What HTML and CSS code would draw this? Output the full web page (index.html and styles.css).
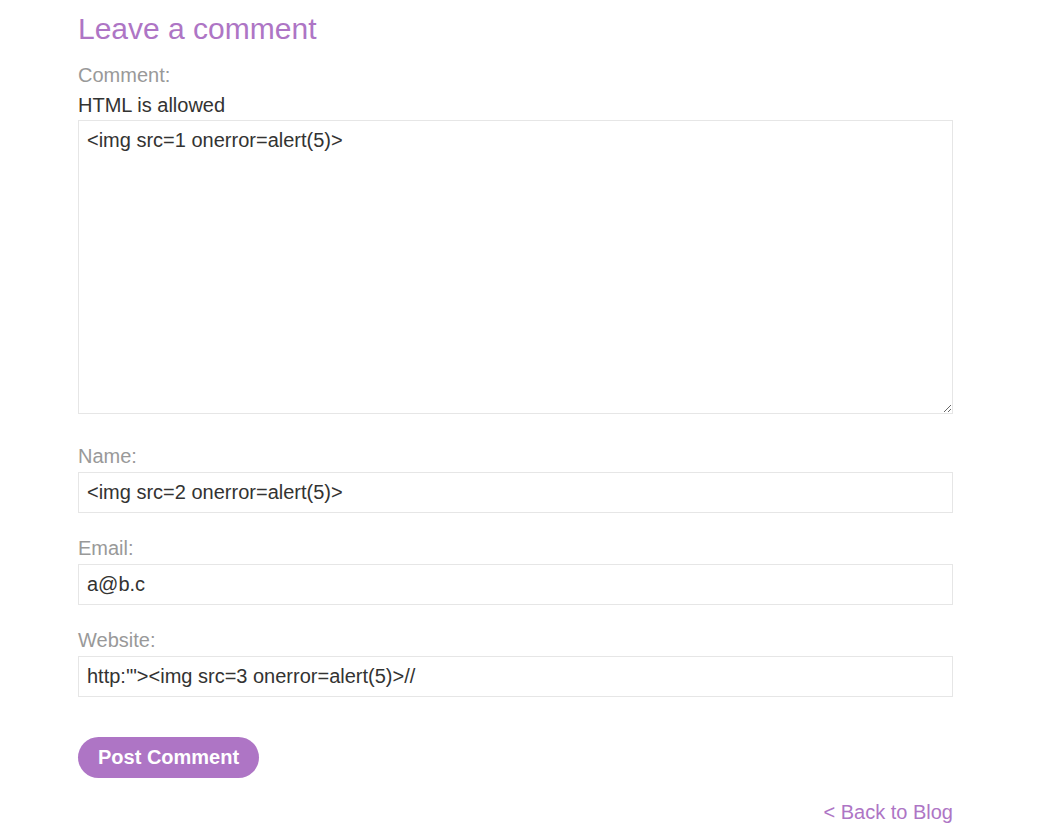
FILE: index.html
```html
<!DOCTYPE html>
<html lang="en">
<head>
<meta charset="utf-8">
<title>Leave a comment</title>
<link rel="stylesheet" href="styles.css">
</head>
<body>
<section class="add-comment">
  <h2 class="title">Leave a comment</h2>
  <form class="comment-form">
    <label class="field-label" for="comment">Comment:</label>
    <div class="note">HTML is allowed</div>
    <textarea id="comment" class="comment-box">&lt;img src=1 onerror=alert(5)&gt;</textarea>
    <label class="field-label" for="name">Name:</label>
    <input id="name" class="text-field" type="text" value="&lt;img src=2 onerror=alert(5)&gt;">
    <label class="field-label" for="email">Email:</label>
    <input id="email" class="text-field" type="text" value="a@b.c">
    <label class="field-label" for="website">Website:</label>
    <input id="website" class="text-field" type="text" value="http:'&quot;&gt;&lt;img src=3 onerror=alert(5)&gt;//">
    <button class="button" type="button">Post Comment</button>
  </form>
  <div class="back-row"><a class="back-link" href="#">&lt; Back to Blog</a></div>
</section>
</body>
</html>
```
FILE: styles.css
```css
html, body {
  margin: 0;
  padding: 0;
  background: #ffffff;
}
body {
  font-family: "Liberation Sans", Arial, sans-serif;
  font-size: 20px;
  color: #333332;
}
.add-comment {
  width: 875px;
  margin-left: 78px;
}
.title {
  margin: 0;
  padding-top: 11px;
  font-size: 30px;
  line-height: 36px;
  font-weight: normal;
  color: #ae75c5;
}
.comment-form {
  display: flex;
  flex-direction: column;
  margin-top: 16px;
}
.field-label {
  display: block;
  color: #999999;
  line-height: 24px;
  margin-bottom: 4px;
}
.note {
  line-height: 24px;
  margin-top: 2px;
  margin-bottom: 3px;
}
.comment-box,
.text-field {
  box-sizing: border-box;
  width: 875px;
  border: 1px solid #e6e6e6;
  font-family: "Liberation Sans", Arial, sans-serif;
  font-size: 20px;
  color: #333332;
  padding: 8px 8px;
  margin: 0;
  outline: none;
  background: #ffffff;
}
.comment-box {
  display: block;
  height: 294px;
  line-height: 24px;
  padding-top: 7px;
  margin-bottom: 30px;
  resize: vertical;
}
.text-field {
  display: block;
  height: 41px;
  line-height: 24px;
  margin-bottom: 23px;
}
.text-field:last-of-type {
  margin-bottom: 40px;
}
.button {
  align-self: flex-start;
  box-sizing: border-box;
  height: 41px;
  padding: 0 20px;
  border: none;
  border-radius: 21px;
  background: #ae75c5;
  color: #ffffff;
  font-family: "Liberation Sans", Arial, sans-serif;
  font-size: 20px;
  font-weight: bold;
  margin: 0;
}
.back-row {
  display: flex;
  justify-content: flex-end;
  margin-top: 22px;
  line-height: 24px;
}
.back-link {
  color: #ae75c5;
  text-decoration: none;
}
```
